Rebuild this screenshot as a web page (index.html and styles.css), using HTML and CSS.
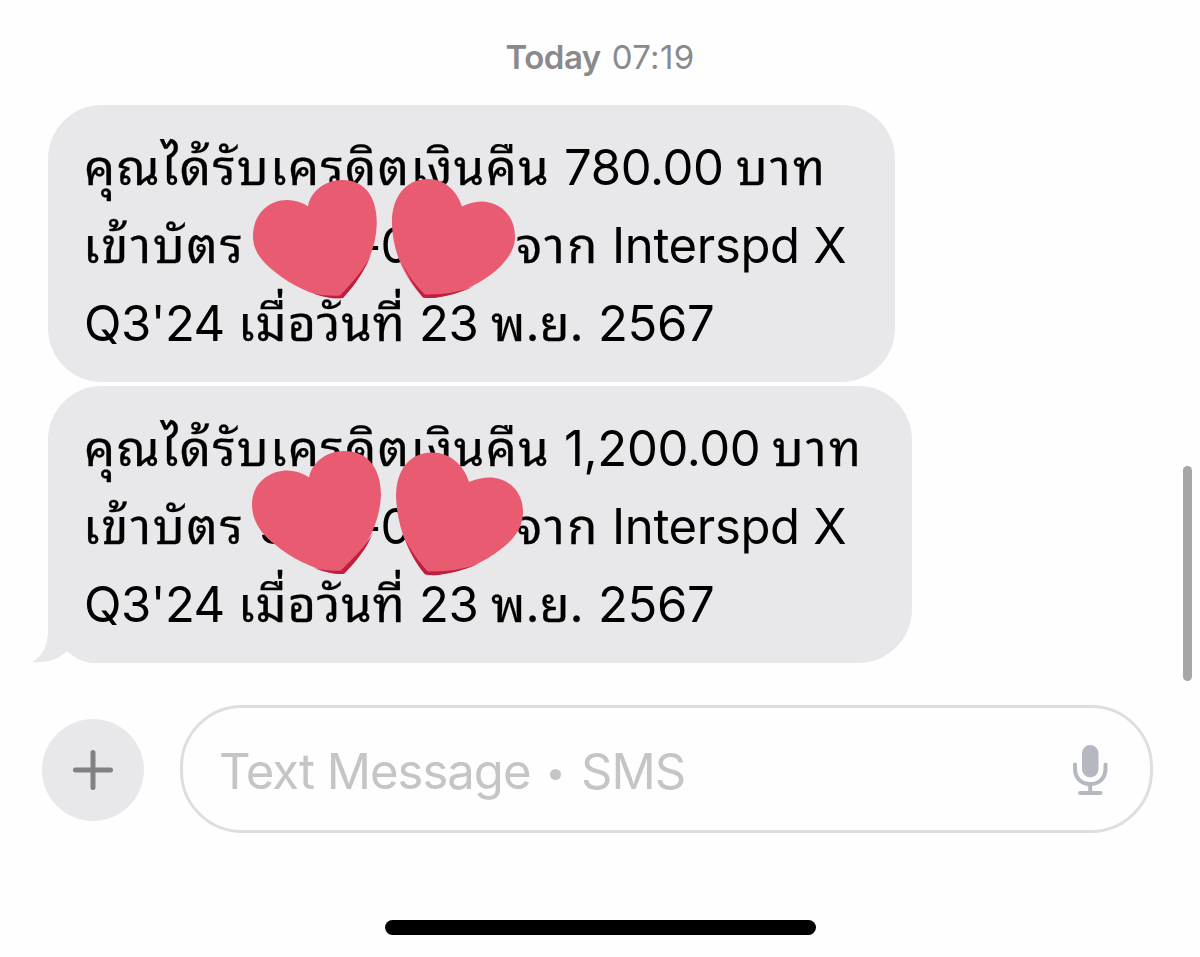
FILE: index.html
```html
<!DOCTYPE html>
<html lang="th">
<head>
<meta charset="utf-8">
<title>Messages</title>
<link rel="stylesheet" href="styles.css">
</head>
<body>
<main class="screen">
  <div class="stamp"><b>Today</b> <span>07:19</span></div>
  <section class="thread">
    <div class="bubble bubble-first">
      <p class="line"><span class="th r1">คุณได้รับเครดิตเงินคืน</span><span class="run n1">780.00</span><span class="th baht">บาท</span></p>
      <p class="line"><span class="th r2">เข้าบัตร</span><span class="run digit">3</span><span class="run card">-0</span><span class="th r3">จาก</span><span class="run r4">Interspd X</span></p>
      <p class="line"><span class="run q">Q3'24</span><span class="th r5">เมื่อวันที่</span><span class="run d">23</span><span class="th m">พ.ย.</span><span class="run">2567</span></p>
    </div>
    <div class="bubble bubble-last">
      <svg class="tail" viewBox="0 0 60 54"><path d="M16 0H60V54C50 53 42 48 35 42C26 51 14 54 0 53C11 47 16 36 16 22Z" fill="#e8e8eb"/></svg>
      <p class="line"><span class="th r1">คุณได้รับเครดิตเงินคืน</span><span class="run n2">1,200.00</span><span class="th baht">บาท</span></p>
      <p class="line"><span class="th r2">เข้าบัตร</span><span class="run digit">3</span><span class="run card">-0</span><span class="th r3">จาก</span><span class="run r4">Interspd X</span></p>
      <p class="line"><span class="run q">Q3'24</span><span class="th r5">เมื่อวันที่</span><span class="run d">23</span><span class="th m">พ.ย.</span><span class="run">2567</span></p>
    </div>
    <svg class="hearts" viewBox="240 170 300 420">
      <path fill="#e85b71" d="M308 206.500C310 192 325 180 342 180C367 180 377.500 200 376.700 225C376 252 361 279 343 298Q337 298.500 331 298C312 295 291 285 275 272C260 260 253 250 253 236C253 215 268 200 287 200Q299 200 308 206.500Z"/>
      <path fill="#bf1e3f" d="M371 255C365 270 355 285 343 298Q337 298.500 331 298Q321 296.500 313 293.500Q327 296.500 340 295.500C354 281 364 269 371 255Z"/>
      <path fill="#e85b71" d="M462 206.500C457 191 445 179 428 179C403 179 391 201 392 225C393 252 404 277 423 297.500Q428 298.300 434 298C458 295 480 284 496 270.500C509 259 515 248 515 237C515 215 500 202 481 201.500Q471 202 462 206.500Z"/>
      <path fill="#bf1e3f" d="M402 262C407 275 414 287 423 297.500Q428 298.300 434 298Q456 295 474 286.500Q452 295 425 294.500C414 284 408 275 402 262Z"/>
      <path fill="#e85b71" d="M309 477.500C312 462 327 451 344 451C370 451 381 471 381 495C380 523 365 552 344 573.700Q338 574.500 331 573C312 568 291 558 275 544.500C260 533 252 520 252 504C252 484 269 470 288 470.500Q300 471 309 477.500Z"/>
      <path fill="#bf1e3f" d="M373 533C367 548 356 562 344 573.700Q338 574.500 331 573Q321 571 314 568.300Q327 571.500 341 570.500C355 556 366 546 373 533Z"/>
      <path fill="#e85b71" d="M469 482C464 465 450 452.500 432 452.500C408 452.500 396 472 396 496C397 527 408 554 425 574.300Q431 575.500 438 575C462 572 484 563 501 549C517 537 523 525 523 512C523 491 508 477 488 477.500Q478 478 469 482Z"/>
      <path fill="#bf1e3f" d="M406 541C411 554 417 565 425 574.300Q431 575.500 438 575Q460 572 480 563.500Q455 572.500 428 571.500C418 561 412 552 406 541Z"/>
    </svg>
  </section>
  <footer class="composer">
    <button class="add" aria-label="Add"><svg viewBox="0 0 40 40"><path d="M20 2.500V37.500M2.500 20H37.500"/></svg></button>
    <div class="field"><span class="hint">Text Message <i class="dot"></i> SMS</span>
      <svg class="mic" viewBox="0 0 36 52"><rect x="10" y="0" width="16.500" height="32.500" rx="8.200" fill="#b5b8c0"/><path d="M3 19.500V23.500C3 33 9 39 18.200 39S33.500 33 33.500 23.500V19.500M18.200 40V48M8 48H28.500" fill="none" stroke="#b5b8c0" stroke-width="4" stroke-linecap="round"/></svg>
    </div>
  </footer>
  <div class="home"></div>
  <div class="scroll"></div>
</main>
</body>
</html>
```
FILE: styles.css
```css
*{box-sizing:border-box}
body{margin:0;background:#fff;font-family:Inter,"Noto Sans Thai Looped","Noto Sans Thai","Loma","Noto Sans",sans-serif;color:#000}
.screen{position:relative;width:1200px;height:957px;overflow:hidden;background:#fefefe;display:flex;flex-direction:column}
.stamp{height:105px;padding-top:36px;display:flex;justify-content:center;gap:11px;font-size:33px;line-height:42px;color:#8a8a8e}
.stamp b{font-weight:600;letter-spacing:-.5px}
.stamp span{letter-spacing:.3px}
.thread{position:relative;display:flex;flex-direction:column;align-items:flex-start;gap:4px;margin-left:48px}
.bubble{position:relative;height:277px;padding:24px 0 0 36px;border-radius:54px;background:#e8e8eb}
.bubble-first{width:847px}
.bubble-last{width:864px;border-bottom-left-radius:0;background:linear-gradient(#e8e8eb,#e8e8eb) no-repeat 0 0/100% 223px,linear-gradient(#e8e8eb,#e8e8eb) no-repeat 44px 0/100% 100%}
.line{position:relative;display:flex;margin:0;height:78px;font-size:49px;line-height:78px;white-space:nowrap}
.run,.th{flex:none}
.run{letter-spacing:-.35px}
.th{letter-spacing:2.4px;-webkit-text-stroke:.25px #000}
.line .r1{width:480px;letter-spacing:1.4px}
.n1{width:172px}
.n2{width:208px}
.line .r2{width:175px;letter-spacing:1.9px;margin-left:-1px;margin-right:1px}
.digit{width:100px}
.card{width:157px;letter-spacing:-1px}
.r3{width:96px}
.q{width:154px;letter-spacing:-.5px}
.line .r5{width:181px;letter-spacing:1px}
.d{width:72px}
.line .m{width:107px;letter-spacing:0}
.tail{position:absolute;left:-16px;bottom:0;width:60px;height:54px}
.hearts{position:absolute;left:192px;top:65px;width:300px;height:420px}
.composer{display:flex;align-items:center;margin:42px 47px 0 42px;gap:36px;height:128px}
.add{width:102px;height:102px;margin-top:2px;padding:0;border:0;border-radius:50%;background:#e8e8eb;display:grid;place-items:center}
.add svg{width:40px;height:40px;fill:none;stroke:#808085;stroke-width:5;stroke-linecap:round}
.field{flex:1;height:128px;border:3px solid #dededf;border-radius:62px;display:flex;align-items:center;justify-content:space-between;padding:3px 42px 0 36px}
.hint{padding-top:2px;font-size:49px;line-height:60px;letter-spacing:-1px;color:#c5c5c8;white-space:nowrap}
.dot{display:inline-block;width:11px;height:11px;border-radius:50%;background:#c5c5c8;vertical-align:9px;margin:0 7px}
.mic{width:36px;height:52px}
.home{width:431px;height:15px;margin:87px 0 0 385px;border-radius:8px;background:#000}
.scroll{position:absolute;right:8px;top:466px;width:9px;height:215px;border-radius:5px;background:#a6a6a8}
```
